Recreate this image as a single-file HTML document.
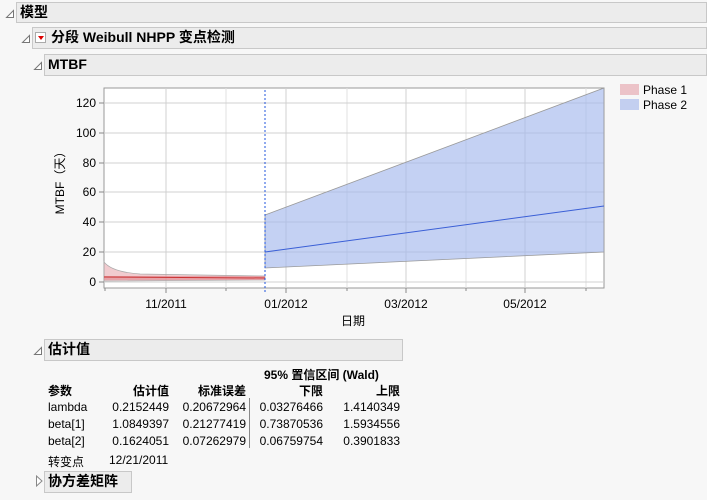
<!DOCTYPE html>
<html><head><meta charset="utf-8"><style>
body{margin:0;width:707px;height:500px;background:#f7f7f7;font-family:"Liberation Sans","Noto Sans CJK SC",sans-serif;position:relative;overflow:hidden;color:#000}
.bar{position:absolute;background:#ececec;border:1px solid #c8c8c8;box-sizing:border-box;font-weight:bold;font-size:14px;line-height:19px;padding-left:3px}
.tri{position:absolute}
.t{position:absolute;font-size:12px;white-space:nowrap}
.r{text-align:right}
</style></head><body>
<svg class="tri" style="left:5px;top:9px" width="10" height="10"><path d="M8.5 1.5 L8.5 8.5 L1.5 8.5 Z" fill="#fff" stroke="#777"/></svg>
<div class="bar" style="left:16px;top:2px;width:691px;height:21px">模型</div>
<svg class="tri" style="left:21px;top:34px" width="10" height="10"><path d="M8.5 1.5 L8.5 8.5 L1.5 8.5 Z" fill="#fff" stroke="#777"/></svg>
<div class="bar" style="left:32px;top:27px;width:675px;height:22px;padding-left:18px">分段 Weibull NHPP 变点检测</div>
<div style="position:absolute;left:35px;top:32px;width:11px;height:11px;border:1px solid #aaa;background:#fff;box-sizing:border-box"><div style="position:absolute;left:2px;top:3px;width:0;height:0;border-left:3px solid transparent;border-right:3px solid transparent;border-top:4px solid #d00"></div></div>
<svg class="tri" style="left:33px;top:61px" width="10" height="10"><path d="M8.5 1.5 L8.5 8.5 L1.5 8.5 Z" fill="#fff" stroke="#777"/></svg>
<div class="bar" style="left:44px;top:54px;width:663px;height:22px">MTBF</div>

<svg style="position:absolute;left:0;top:0" width="707" height="340">
<rect x="104" y="88" width="500" height="200" fill="#fff" stroke="#999"/>
<g stroke="#e0e0e0"><line x1="226" y1="88" x2="226" y2="288"/><line x1="347" y1="88" x2="347" y2="288"/><line x1="466" y1="88" x2="466" y2="288"/><line x1="586" y1="88" x2="586" y2="288"/></g>
<g stroke="#d0d0d0"><line x1="166" y1="88" x2="166" y2="288"/><line x1="286" y1="88" x2="286" y2="288"/><line x1="406" y1="88" x2="406" y2="288"/><line x1="525" y1="88" x2="525" y2="288"/>
<line x1="104" y1="282" x2="604" y2="282"/><line x1="104" y1="252" x2="604" y2="252"/><line x1="104" y1="222" x2="604" y2="222"/><line x1="104" y1="192" x2="604" y2="192"/><line x1="104" y1="163" x2="604" y2="163"/><line x1="104" y1="133" x2="604" y2="133"/><line x1="104" y1="103" x2="604" y2="103"/></g>
<path d="M104 262 Q112 272 140 274 L265 276 L265 280 L104 281 Z" fill="#e5a0a8" fill-opacity=".55" stroke="#aaa" stroke-width=".7"/>
<rect x="104" y="276" width="161" height="4" fill="#e08890" opacity=".6"/>
<line x1="104" y1="277" x2="265" y2="278" stroke="#c33" stroke-width="1"/>
<path d="M265 215 L604 88 L604 252 L265 268 Z" fill="#a5b8ec" fill-opacity=".65" stroke="#999" stroke-width=".8"/>
<line x1="265" y1="252" x2="604" y2="206" stroke="#3a5fd6" stroke-width="1"/>
<line x1="265" y1="90" x2="265" y2="292" stroke="#2255dd" stroke-dasharray="2,2"/>
<g stroke="#888"><line x1="99" y1="282" x2="104" y2="282"/><line x1="99" y1="252" x2="104" y2="252"/><line x1="99" y1="222" x2="104" y2="222"/><line x1="99" y1="192" x2="104" y2="192"/><line x1="99" y1="163" x2="104" y2="163"/><line x1="99" y1="133" x2="104" y2="133"/><line x1="99" y1="103" x2="104" y2="103"/>
<line x1="166" y1="288" x2="166" y2="293"/><line x1="226" y1="288" x2="226" y2="291"/><line x1="286" y1="288" x2="286" y2="293"/><line x1="347" y1="288" x2="347" y2="291"/><line x1="406" y1="288" x2="406" y2="293"/><line x1="466" y1="288" x2="466" y2="291"/><line x1="525" y1="288" x2="525" y2="293"/><line x1="586" y1="288" x2="586" y2="291"/><line x1="105" y1="288" x2="105" y2="291"/></g>
<g font-size="12" text-anchor="end" font-family="Liberation Sans,sans-serif"><text x="96" y="286">0</text><text x="96" y="256">20</text><text x="96" y="226">40</text><text x="96" y="196">60</text><text x="96" y="167">80</text><text x="96" y="137">100</text><text x="96" y="107">120</text></g>
<g font-size="12" text-anchor="middle" font-family="Liberation Sans,sans-serif"><text x="166" y="308">11/2011</text><text x="286" y="308">01/2012</text><text x="406" y="308">03/2012</text><text x="525" y="308">05/2012</text></g>
<text x="353" y="325" font-size="12" text-anchor="middle" font-family="Liberation Sans,Noto Sans CJK SC,sans-serif">日期</text>
<text transform="translate(64,180) rotate(-90)" font-size="12" text-anchor="middle" font-family="Liberation Sans,Noto Sans CJK SC,sans-serif">MTBF（天）</text>
<rect x="620" y="84" width="19" height="11" fill="#ecc3c8"/><rect x="620" y="99" width="19" height="11" fill="#c3cff0"/>
<text x="643" y="94" font-size="12" font-family="Liberation Sans,sans-serif">Phase 1</text><text x="643" y="109" font-size="12" font-family="Liberation Sans,sans-serif">Phase 2</text>
</svg>

<svg class="tri" style="left:33px;top:346px" width="10" height="10"><path d="M8.5 1.5 L8.5 8.5 L1.5 8.5 Z" fill="#fff" stroke="#777"/></svg>
<div class="bar" style="left:44px;top:339px;width:359px;height:22px">估计值</div>
<div class="t" style="left:264px;top:366px;font-weight:bold">95% 置信区间 (Wald)</div>
<div class="t" style="left:48px;top:382px;font-weight:bold">参数</div>
<div class="t r" style="left:100px;width:69px;top:382px;font-weight:bold">估计值</div>
<div class="t r" style="left:170px;width:76px;top:382px;font-weight:bold">标准误差</div>
<div class="t r" style="left:250px;width:73px;top:382px;font-weight:bold">下限</div>
<div class="t r" style="left:330px;width:70px;top:382px;font-weight:bold">上限</div>
<div style="position:absolute;left:249px;top:398px;width:1px;height:50px;background:#888"></div>
<div class="t" style="left:48px;top:399px;line-height:17px">lambda<br>beta[1]<br>beta[2]</div>
<div class="t r" style="left:100px;width:69px;top:399px;line-height:17px">0.2152449<br>1.0849397<br>0.1624051</div>
<div class="t r" style="left:170px;width:76px;top:399px;line-height:17px">0.20672964<br>0.21277419<br>0.07262979</div>
<div class="t r" style="left:250px;width:73px;top:399px;line-height:17px">0.03276466<br>0.73870536<br>0.06759754</div>
<div class="t r" style="left:330px;width:70px;top:399px;line-height:17px">1.4140349<br>1.5934556<br>0.3901833</div>
<div class="t" style="left:48px;top:453px">转变点</div>
<div class="t" style="left:109px;top:453px">12/21/2011</div>
<svg class="tri" style="left:35px;top:475px" width="9" height="12"><path d="M1.5 1 L7 6 L1.5 11 Z" fill="#fff" stroke="#888"/></svg>
<div class="bar" style="left:44px;top:471px;width:88px;height:22px">协方差矩阵</div>
</body></html>
